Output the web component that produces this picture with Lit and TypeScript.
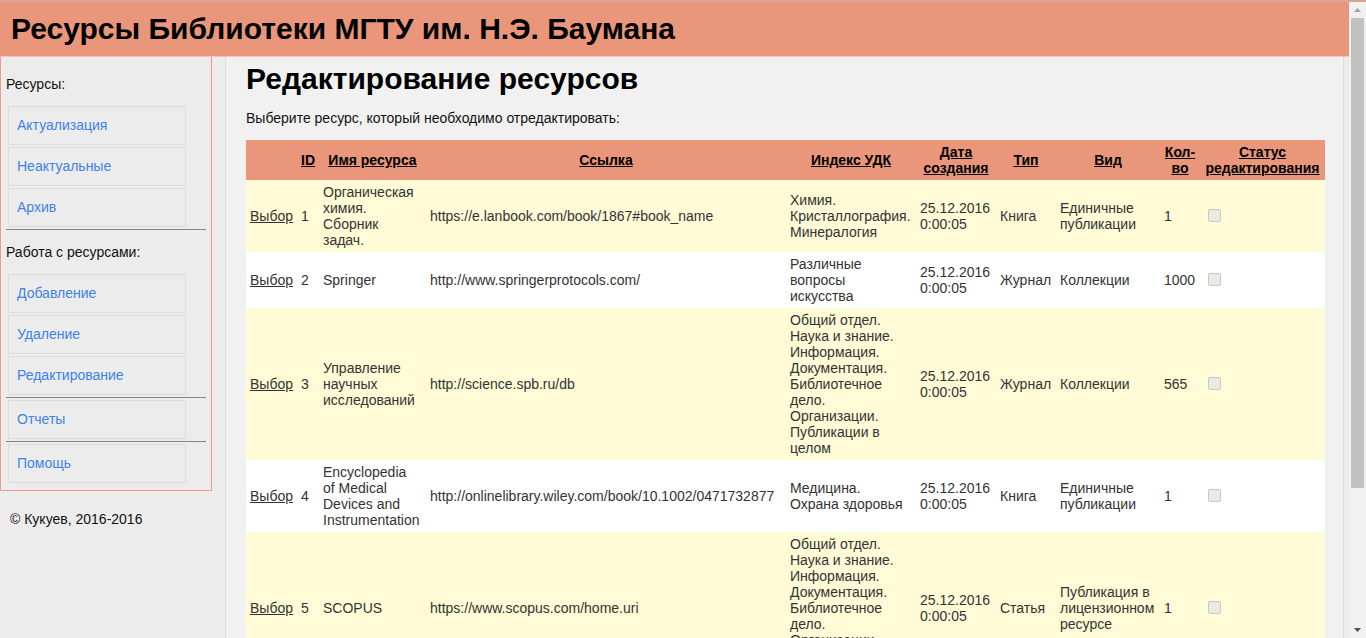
import { LitElement, html, css } from "lit";
import { customElement, property } from "lit/decorators.js";

interface Resource {
  id: number;
  name: string;
  url: string;
  udc: string;
  type: string;
  kind: string;
  count: number;
}

const GENERAL =
  "Общий отдел. Наука и знание. Информация. Документация. Библиотечное дело. Организации. Публикации в целом";

const RESOURCES: Resource[] = [
  { id: 1, name: "Органическая химия. Сборник задач.", url: "https://e.lanbook.com/book/1867#book_name", udc: "Химия. Кристаллография. Минералогия", type: "Книга", kind: "Единичные публикации", count: 1 },
  { id: 2, name: "Springer", url: "http://www.springerprotocols.com/", udc: "Различные вопросы искусства", type: "Журнал", kind: "Коллекции", count: 1000 },
  { id: 3, name: "Управление научных исследований", url: "http://science.spb.ru/db", udc: GENERAL, type: "Журнал", kind: "Коллекции", count: 565 },
  { id: 4, name: "Encyclopedia of\u00a0Medical Devices and Instrumentation", url: "http://onlinelibrary.wiley.com/book/10.1002/0471732877", udc: "Медицина. Охрана здоровья", type: "Книга", kind: "Единичные публикации", count: 1 },
  { id: 5, name: "SCOPUS", url: "https://www.scopus.com/home.uri", udc: GENERAL, type: "Статья", kind: "Публикация в лицензионном ресурсе", count: 1 },
];

const COLUMNS = [
  { title: "ID", css: "c-id" },
  { title: "Имя ресурса", css: "c-name" },
  { title: "Ссылка", css: "c-url" },
  { title: "Индекс УДК", css: "c-udc" },
  { title: "Дата создания", css: "c-date" },
  { title: "Тип", css: "c-type" },
  { title: "Вид", css: "c-kind" },
  { title: "Кол-во", css: "c-count" },
  { title: "Статус редактирования", css: "c-status" },
];

@customElement("side-menu")
export class SideMenu extends LitElement {
  static styles = css`
    :host { display: block; }
    .box {
      box-sizing: border-box;
      width: 212px;
      padding: 5px 5px 7px;
      border: 1px solid #f29a88;
      border-top: 0;
    }
    .label { margin: 14px 0; line-height: 16px; }
    .list { display: flex; flex-direction: column; gap: 2px; margin: 0; padding: 0 20px 0 2px; list-style: none; }
    .link {
      display: block;
      padding: 10px 8px 11px;
      border: 1px solid #dcdcdc;
      line-height: 16px;
      color: #3f82e8;
      text-decoration: none;
    }
    .link:hover { background: #fff; }
    .rule { height: 1px; margin: 2px 0; border: 0; background: #868686; }
  `;

  private list(items: string[]) {
    return html`<ul class="list">
      ${items.map((t) => html`<li><a class="link" href="#">${t}</a></li>`)}
    </ul>`;
  }

  render() {
    return html`<nav class="box">
      <p class="label">Ресурсы:</p>
      ${this.list(["Актуализация", "Неактуальные", "Архив"])}
      <hr class="rule" />
      <p class="label">Работа с ресурсами:</p>
      ${this.list(["Добавление", "Удаление", "Редактирование"])}
      <hr class="rule" />
      ${this.list(["Отчеты"])}
      <hr class="rule" />
      ${this.list(["Помощь"])}
    </nav>`;
  }
}

@customElement("resource-table")
export class ResourceTable extends LitElement {
  @property({ attribute: false }) rows: Resource[] = [];

  static styles = css`
    :host { display: block; }
    .table { table-layout: fixed; width: 100%; border-collapse: collapse; line-height: 16px; color: #333; }
    .c-pick { width: 51px; }
    .c-id { width: 22px; }
    .c-name { width: 107px; }
    .c-url { width: 360px; }
    .c-udc { width: 130px; }
    .c-date { width: 80px; }
    .c-type { width: 60px; }
    .c-kind { width: 104px; }
    .c-count { width: 40px; }
    .head { background: #e9967a; color: #000; }
    .row { background: #fff; }
    .row:nth-child(odd) { background: #fffbd6; }
    .th, .td { padding: 4px; }
    .td { text-align: left; }
    .link { color: inherit; text-decoration: underline; }
    .check {
      appearance: none;
      display: inline-block;
      box-sizing: border-box;
      width: 13px;
      height: 13px;
      margin: 4px 3px 2px 4px;
      border: 1px solid #c9c7c2;
      border-radius: 2px;
      background: #ebebe6;
      vertical-align: baseline;
    }
  `;

  render() {
    return html`<table class="table">
      <colgroup>
        <col class="c-pick" />
        ${COLUMNS.map((c) => html`<col class=${c.css} />`)}
      </colgroup>
      <thead>
        <tr class="head">
          <td class="th"></td>
          ${COLUMNS.map((c) => html`<th class="th" scope="col"><a class="link" href="#">${c.title}</a></th>`)}
        </tr>
      </thead>
      <tbody>
        ${this.rows.map(
          (r) => html`<tr class="row">
            <td class="td"><a class="link" href="#">Выбор</a></td>
            <td class="td">${r.id}</td>
            <td class="td">${r.name}</td>
            <td class="td">${r.url}</td>
            <td class="td">${r.udc}</td>
            <td class="td">25.12.2016 0:00:05</td>
            <td class="td">${r.type}</td>
            <td class="td">${r.kind}</td>
            <td class="td">${r.count}</td>
            <td class="td"><input class="check" type="checkbox" disabled aria-label="Статус редактирования" /></td>
          </tr>`
        )}
      </tbody>
    </table>`;
  }
}

@customElement("scroll-rail")
export class ScrollRail extends LitElement {
  static styles = css`
    :host { display: flex; flex-direction: column; width: 17px; background: #f1f1f1; }
    .arrow { display: block; flex: none; width: 17px; height: 16px; }
    .track { display: grid; grid-template-rows: 7fr 2fr; flex: 1; padding: 0 2px; }
    .thumb { background: #c1c1c1; }
  `;

  render() {
    return html`
      <svg class="arrow" viewBox="0 0 17 16"><path d="M5 10 8.5 6 12 10z" fill="#a3a3a3" /></svg>
      <div class="track"><div class="thumb"></div></div>
      <svg class="arrow" viewBox="0 0 17 16"><path d="M5 6h7L8.5 10z" fill="#505050" /></svg>
    `;
  }
}

@customElement("app-root")
export class AppRoot extends LitElement {
  static styles = css`
    :host {
      display: flex;
      flex-direction: column;
      box-sizing: border-box;
      height: 100vh;
      overflow: hidden;
      border-top: 2px solid #dba595;
      background: #ececec;
      font: 14px/16px "Liberation Sans", Arial, sans-serif;
      color: #111;
    }
    .window { display: flex; flex: 1; min-height: 0; }
    .page { display: flex; flex-direction: column; flex: 1; min-width: 0; }
    .banner { flex: none; padding: 10px 11px; border-bottom: 1px solid #f4c4b6; background: #e9967a; }
    .heading { margin: 0; font-size: 30px; line-height: 34px; font-weight: bold; color: #000; }
    .body { display: flex; flex: 1; min-height: 0; overflow: hidden; }
    .aside { flex: none; width: 225px; }
    .copy { margin: 20px 10px; }
    .main {
      flex: 1;
      min-width: 0;
      margin-right: 5px;
      padding: 5px 18px 0 20px;
      border: solid #dcdcdc;
      border-width: 0 1px;
      background: #f1f1f1;
    }
    .intro { margin: 14px 0; }
  `;

  render() {
    return html`<div class="window">
      <div class="page">
        <header class="banner"><h1 class="heading">Ресурсы Библиотеки МГТУ им. Н.Э. Баумана</h1></header>
        <div class="body">
          <aside class="aside">
            <side-menu></side-menu>
            <p class="copy">© Кукуев, 2016-2016</p>
          </aside>
          <main class="main">
            <h2 class="heading">Редактирование ресурсов</h2>
            <p class="intro">Выберите ресурс, который необходимо отредактировать:</p>
            <resource-table .rows=${RESOURCES}></resource-table>
          </main>
        </div>
      </div>
      <scroll-rail></scroll-rail>
    </div>`;
  }
}
